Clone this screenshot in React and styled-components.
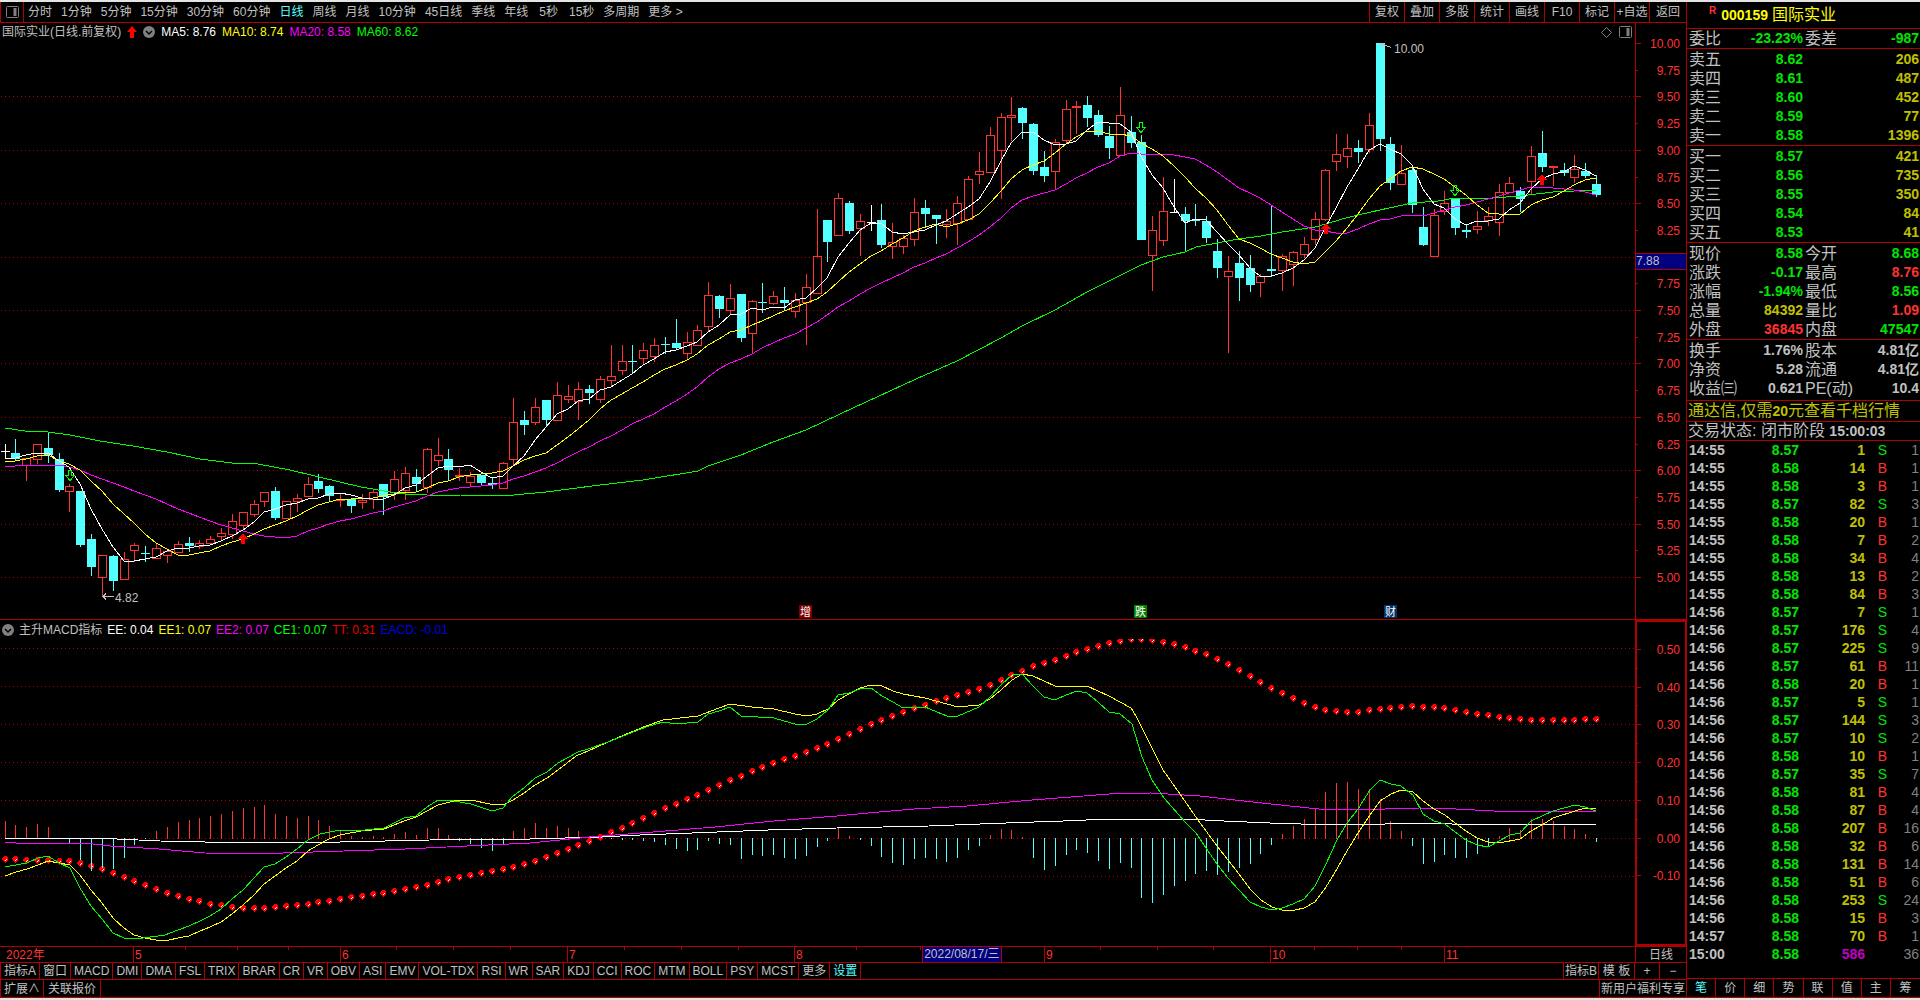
import React, { useState } from 'react';
import styled, { createGlobalStyle } from 'styled-components';

const LINE = '#b00000';
const RED = '#ff3232';
const CYAN = '#54ffff';
const GREEN = '#00e600';
const SILVER = '#c0c0c0';
const GOLD = '#c0c000';
const MAGENTA = '#ff00ff';

const periods = ['分时', '1分钟', '5分钟', '15分钟', '30分钟', '60分钟', '日线', '周线', '月线', '10分钟', '45日线', '季线', '年线', '5秒', '15秒', '多周期', '更多 >'];
const tools = ['复权', '叠加', '多股', '统计', '画线', 'F10', '标记', '+自选', '返回'];
const indicators = ['指标A', '窗口', 'MACD', 'DMI', 'DMA', 'FSL', 'TRIX', 'BRAR', 'CR', 'VR', 'OBV', 'ASI', 'EMV', 'VOL-TDX', 'RSI', 'WR', 'SAR', 'KDJ', 'CCI', 'ROC', 'MTM', 'BOLL', 'PSY', 'MCST', '更多', '设置'];
const sideTabs = ['笔', '价', '细', '势', '联', '值', '主', '筹'];

// type, high, body top, body bottom, low
const candles = `w 444 451 451 458|c 439 453 459 460|r 458 458 465 481|r 444 444 459 464|c 432 448 455 463|c 453 459 490 492
r 484 486 491 512|c 491 491 545 547|c 534 539 567 576|r 555 555 577 597|c 555 556 581 591|r 552 559 579 579
r 543 545 550 562|c 546 553 553 562|r 544 548 558 558|r 551 551 555 563|r 541 544 552 552|c 537 543 546 552
r 540 543 546 549|r 536 539 543 543|r 528 533 536 541|r 514 521 534 539|r 512 512 525 530|r 500 504 514 517
r 492 492 501 507|c 487 491 518 520|r 501 501 518 518|r 494 498 501 512|r 477 484 496 497|c 474 481 489 493
c 485 486 496 502|r 494 499 500 507|c 499 499 506 513|r 494 500 502 509|r 489 492 499 509|c 484 484 497 515
r 471 479 492 500|r 467 473 490 500|c 469 477 484 492|r 448 449 487 493|r 438 455 460 466|c 449 459 470 480
r 468 475 476 481|r 472 476 482 487|c 475 475 483 486|c 477 483 485 489|r 462 463 488 488|r 398 422 459 465
c 411 420 425 435|r 398 407 422 425|c 400 400 420 426|r 382 395 420 420|r 385 396 399 403|r 382 389 401 420
c 385 389 393 404|r 376 379 399 403|r 345 376 380 386|r 345 361 370 375|c 345 361 361 373|r 343 350 358 365
r 338 345 356 362|c 337 344 344 354|c 319 343 348 350|r 332 342 353 360|r 325 330 345 345|r 282 295 326 332
c 295 296 309 318|r 284 298 310 315|c 294 294 338 342|r 300 301 333 354|c 283 302 302 313|r 291 296 303 305
c 287 300 303 311|r 293 300 311 318|r 274 287 302 345|r 209 256 293 293|c 220 220 242 262|r 193 198 235 236
c 201 203 231 234|r 214 221 228 256|w 205 222 222 231|c 204 220 245 248|r 223 242 246 259|r 235 238 246 254
r 198 212 239 246|c 200 208 214 228|c 215 215 219 244|r 209 221 224 238|r 196 203 223 245|r 176 179 219 219
r 152 171 174 184|r 127 135 172 172|r 113 117 150 199|r 97 115 117 141|c 107 108 123 139|c 123 124 171 175
c 151 167 176 182|r 139 142 171 190|r 100 109 140 144|r 101 106 107 134|c 96 105 118 127|c 110 115 135 137
c 126 136 148 159|r 87 115 155 155|c 116 132 143 148|c 135 142 240 240|r 216 230 255 291|r 177 211 240 246
w 179 212 212 212|c 207 214 221 251|c 204 220 220 226|c 216 221 238 243|c 239 251 268 278|r 256 271 276 353
c 251 263 278 301|c 255 268 285 292|r 274 276 282 297|c 205 269 271 277|r 254 256 270 291|r 251 252 264 286
r 237 244 254 258|r 212 219 239 245|r 169 170 219 221|r 134 154 161 171|r 134 148 156 168|c 140 148 152 163
r 113 125 149 153|c 43 43 139 151|c 137 144 183 190|r 145 173 184 185|c 165 170 205 213|c 207 227 245 246
r 209 215 256 256|r 191 203 211 215|c 198 198 228 235|c 224 230 232 238|r 211 226 229 234|r 207 216 220 226
r 184 192 222 236|r 177 183 192 192|c 187 191 199 212|r 146 156 181 194|c 131 153 167 172|r 166 166 167 186
c 163 170 173 176|r 155 169 177 183|c 163 171 176 178|c 175 184 195 197`
  .split(/[|\n]/)
  .map((row) => {
    const [type, ...v] = row.split(' ');
    const [high, top, bottom, low] = v.map(Number);
    return { type, high, top, bottom, low, close: type === 'c' ? bottom : top };
  });

const histogram = [
  821, 825, 827, 824, 827, 838, 842, 859, 870, 867, 868, 857, 844, 838, 831, 827, 822, 820, 818, 816, 814, 811, 808, 807, 805,
  814, 816, 818, 816, 820, 826, 831, 836, 837, 836, 837, 834, 832, 835, 828, 828, 835, 840, 843, 847, 850, 844, 831, 828, 823,
  828, 826, 828, 831, 836, 837, 838, 839, 839, 840, 841, 844, 848, 850, 849, 840, 843, 844, 858, 854, 855, 854, 857, 858, 855,
  846, 840, 828, 836, 839, 845, 856, 862, 864, 858, 857, 858, 861, 857, 849, 845, 835, 829, 830, 837, 857, 869, 865, 854, 849,
  852, 860, 868, 862, 867, 897, 902, 894, 885, 880, 873, 870, 874, 871, 867, 863, 853, 844, 834, 826, 819, 809, 792, 783, 782,
  789, 789, 799, 821, 831, 845, 863, 861, 854, 857, 857, 853, 846, 836, 828, 830, 819, 819, 821, 826, 829, 834, 841,
];

const dots = [
  859, 859, 860, 860, 860, 861, 861, 863, 866, 869, 873, 877, 881, 885, 889, 893, 896, 899, 901, 904, 905, 907, 908, 908, 908,
  907, 906, 905, 904, 902, 901, 899, 897, 896, 894, 893, 891, 889, 887, 885, 882, 879, 877, 875, 873, 871, 869, 867, 864, 861,
  857, 853, 849, 845, 841, 837, 832, 828, 823, 818, 813, 808, 804, 799, 795, 790, 785, 780, 776, 771, 767, 763, 759, 756, 752,
  748, 744, 739, 734, 729, 724, 720, 716, 712, 708, 705, 701, 698, 695, 692, 689, 685, 680, 675, 671, 666, 663, 660, 656, 652,
  649, 646, 643, 641, 639, 639, 640, 642, 644, 647, 651, 654, 659, 664, 670, 676, 682, 688, 693, 698, 703, 707, 710, 711, 712,
  712, 710, 709, 708, 707, 706, 707, 707, 708, 710, 712, 714, 715, 717, 718, 719, 720, 720, 720, 720, 720, 719, 719,
];

const ma60 = '5,428 25,431 48,432 70,435 100,441 133,446 167,452 200,459 232,463 258,464 290,470 319,477 340,482 361,487 390,492 405,494 427,495 460,495 503,496 546,492 600,485 643,480 698,471 708,466 741,455 773,442 806,430 840,414 916,379 957,361 1001,338 1022,326 1055,310 1087,292 1131,270 1141,265 1163,257 1185,252 1196,247 1217,243 1239,239 1261,236 1282,232 1315,227 1326,224 1342,219 1358,215 1380,210 1412,203 1438,201 1455,198 1493,198 1520,196 1553,192 1596,190';

const ee = '5,838 95,838 160,841 205,842 340,842 430,840 530,839 600,837 640,835 692,833 768,830 837,828 929,826 1006,823 1063,821 1109,819 1186,819 1224,821 1270,823 1301,824 1385,824 1399,823 1449,823 1452,824 1596,824';

const ee2 = '5,842 16,843 85,843 110,846 159,849 205,853 254,854 313,852 405,849 530,843 590,837 653,832 715,827 774,821 837,816 868,813 914,809 967,806 1032,800 1071,797 1109,794 1151,793 1200,796 1235,800 1271,804 1319,809 1385,809 1420,808 1456,809 1494,811 1596,811';

const ee1 = '5,876 16,872 27,869 38,865 48,861 59,863 70,865 80,875 91,890 102,903 113,918 124,928 134,935 145,938 156,940 169,940 178,938 189,936 200,931 210,927 221,922 232,914 243,905 254,895 264,884 286,868 297,861 308,851 318,845 329,839 340,835 361,831 384,829 404,821 416,817 427,811 438,805 454,801 471,800 490,804 503,805 513,800 524,793 535,785 547,778 558,770 576,756 588,751 608,742 624,735 646,726 663,720 698,716 719,708 730,704 752,707 774,709 795,714 807,716 817,714 828,709 838,700 849,694 860,688 871,685 882,686 893,691 903,694 925,698 947,704 958,707 979,705 990,699 1001,690 1012,680 1022,674 1033,676 1044,681 1055,686 1066,687 1087,686 1098,691 1109,696 1120,702 1131,708 1136,716 1163,770 1180,794 1198,820 1217,846 1239,874 1250,889 1261,900 1272,907 1282,910 1295,910 1304,908 1315,902 1326,887 1337,869 1347,851 1358,833 1370,815 1380,801 1391,794 1401,790 1413,792 1423,801 1434,809 1445,815 1455,823 1466,831 1477,838 1488,842 1499,843 1520,839 1531,831 1542,825 1553,818 1575,811 1585,808 1596,809';

const ce1 = '5,867 27,863 38,858 48,856 59,863 70,868 80,888 91,906 102,919 113,933 124,938 143,938 165,935 178,930 189,926 200,921 210,916 221,909 232,899 243,890 254,878 264,867 275,864 286,857 297,849 308,840 320,834 340,830 355,831 384,828 404,818 416,816 427,807 438,800 454,801 471,804 492,811 503,808 512,797 524,788 535,778 547,772 558,763 578,752 588,749 608,742 646,727 663,722 677,724 698,722 708,714 719,711 730,707 741,716 774,718 784,721 795,724 807,724 817,719 828,710 838,695 849,693 860,689 871,688 882,696 893,702 903,708 925,707 937,712 947,716 958,716 979,707 990,697 1001,685 1012,675 1022,674 1033,686 1044,697 1055,700 1066,695 1077,691 1087,693 1098,702 1109,712 1120,714 1132,724 1142,757 1152,780 1164,798 1186,823 1196,833 1206,848 1217,864 1228,878 1239,890 1250,902 1261,907 1272,910 1282,908 1293,904 1304,899 1315,886 1326,864 1337,840 1347,823 1358,809 1370,790 1380,780 1391,784 1401,786 1413,795 1423,814 1434,821 1445,824 1455,832 1466,840 1477,845 1488,847 1499,841 1510,835 1520,833 1531,821 1542,816 1553,811 1575,805 1585,807 1596,811';

const sells = [['卖五', '8.62', '206'], ['卖四', '8.61', '487'], ['卖三', '8.60', '452'], ['卖二', '8.59', '77'], ['卖一', '8.58', '1396']];
const buys = [['买一', '8.57', '421'], ['买二', '8.56', '735'], ['买三', '8.55', '350'], ['买四', '8.54', '84'], ['买五', '8.53', '41']];

const quotes = [
  ['现价', '8.58', GREEN, '今开', '8.68', GREEN],
  ['涨跌', '-0.17', GREEN, '最高', '8.76', RED],
  ['涨幅', '-1.94%', GREEN, '最低', '8.56', GREEN],
  ['总量', '84392', GOLD, '量比', '1.09', RED],
  ['外盘', '36845', RED, '内盘', '47547', GREEN],
];

const basics = [
  ['换手', '1.76%', SILVER, '股本', '4.81亿', SILVER],
  ['净资', '5.28', SILVER, '流通', '4.81亿', SILVER],
  ['收益㈢', '0.621', SILVER, 'PE(动)', '10.4', SILVER],
];

const ticks = `14:55 8.57 1 S 1|14:55 8.58 14 B 1|14:55 8.58 3 B 1|14:55 8.57 82 S 3|14:55 8.58 20 B 1|14:55 8.58 7 B 2
14:55 8.58 34 B 4|14:55 8.58 13 B 2|14:55 8.58 84 B 3|14:56 8.57 7 S 1|14:56 8.57 176 S 4|14:56 8.57 225 S 9
14:56 8.57 61 B 11|14:56 8.58 20 B 1|14:56 8.57 5 S 1|14:56 8.57 144 S 3|14:56 8.57 10 S 2|14:56 8.58 10 B 1
14:56 8.57 35 S 7|14:56 8.58 81 B 4|14:56 8.58 87 B 4|14:56 8.58 207 B 16|14:56 8.58 32 B 6|14:56 8.58 131 B 14
14:56 8.58 51 B 6|14:56 8.58 253 S 24|14:56 8.58 15 B 3|14:57 8.58 70 B 1|15:00 8.58 586 - 36`
  .split(/[|\n]/)
  .map((row) => row.split(' '));

const months = ['2022年', '5', '6', '7', '8', '9', '10', '11'];
const weekTicks = [185, 237, 288, 396, 453, 510, 624, 681, 738, 856, 920, 1100, 1157, 1213, 1314, 1357, 1401];

const xAt = (i) => Math.floor(5 + i * 10.827);
const priceY = (price) => Math.round(43 + (10 - price) * 106.8);
const macdY = (value) => Math.round(838 - value * 381);

// average of the last n closes, `head` holds the points before n closes exist
const movingAverage = (n, head) =>
  candles
    .map((_, i) => {
      const y = i < head.length
        ? head[i]
        : candles.slice(i - n + 1, i + 1).reduce((sum, c) => sum + c.close, 0) / n;
      return `${xAt(i)},${Math.round(y)}`;
    })
    .join(' ');

const ma5 = movingAverage(5, [458, 458, 455, 453]);
const ma10 = movingAverage(10, [462, 461, 459, 456, 455, 461, 464, 470, 481]);
const ma20 = movingAverage(20, [466, 466, 465, 465, 465, 465, 467, 470, 475, 479, 483, 487, 491, 495, 499, 504, 509, 513, 517]);

function Candle({ x, type, high, top, bottom, low }) {
  const color = type === 'r' ? RED : type === 'c' ? CYAN : '#ffffff';
  return (
    <g fill={color}>
      {high < top && <rect x={x} y={high} width="1" height={top - high} />}
      {low > bottom && <rect x={x} y={bottom} width="1" height={low - bottom} />}
      {type === 'r' && bottom - top > 1 ? (
        <rect x={x - 3.5} y={top + 0.5} width="8" height={bottom - top} fill="none" stroke={color} />
      ) : (
        <rect x={x - 4} y={top} width="9" height={Math.max(bottom - top, 1) + (type === 'r' ? 1 : 0)} />
      )}
    </g>
  );
}

const Curve = ({ points, color }) => <polyline points={points} fill="none" stroke={color} strokeWidth="1" />;

const GridLine = ({ y }) => <line x1="1" x2="1635" y1={y + 0.5} y2={y + 0.5} stroke={LINE} strokeDasharray="1 3" />;

const BuyMark = ({ x, y }) => <path d={`M${x} ${y}l5 6h-3v5h-4v-5h-3z`} fill="#ff0000" />;
const SellMark = ({ x, y }) => <path d={`M${x - 1.5} ${y + 0.5}h3v5h3l-4.5 5l-4.5 -5h3z`} fill="none" stroke="#00ff00" />;

function PriceChart() {
  return (
    <Plot viewBox="0 41 1635 578" preserveAspectRatio="none" shapeRendering="crispEdges">
      {[9.5, 9, 8.5, 8, 7.5, 7, 6.5, 6, 5.5, 5].map((p) => <GridLine key={p} y={priceY(p)} />)}
      {candles.map((c, i) => <Candle key={i} x={xAt(i)} {...c} />)}
      <Curve points={ma60} color="#00ff00" />
      <Curve points={ma20} color={MAGENTA} />
      <Curve points={ma10} color="#ffff00" />
      <Curve points={ma5} color="#ffffff" />
      <BuyMark x={243} y={533} />
      <BuyMark x={1326} y={223} />
      <BuyMark x={1542} y={174} />
      <SellMark x={70} y={470} />
      <SellMark x={1141} y={122} />
      <SellMark x={1455} y={185} />
      <path d="M114 596.500H103M106 593.500l-3 3l3 3" fill="none" stroke={SILVER} />
      <text x="115" y="602" fill={SILVER}>4.82</text>
      <path d="M1391 47.500L1382 44M1380 43.500h4M1381 44v3" fill="none" stroke={SILVER} />
      <text x="1394" y="53" fill={SILVER}>10.00</text>
      <rect x="799" y="605" width="13" height="13" fill="#800000" />
      <text x="800" y="616" fontSize="11" fill="#ffffff">增</text>
      <rect x="1134" y="605" width="13" height="13" fill="#008000" />
      <text x="1135" y="616" fontSize="11" fill="#ffffff">跌</text>
      <rect x="1384" y="605" width="13" height="13" fill="#003468" />
      <text x="1385" y="616" fontSize="11" fill="#ffffff">财</text>
    </Plot>
  );
}

function PriceAxis() {
  const labels = [];
  for (let p = 10; p >= 5; p -= 0.25) labels.push(p);
  return (
    <Plot viewBox="0 23 50 596" preserveAspectRatio="none" shapeRendering="crispEdges">
      {labels.map((p) => (
        <g key={p}>
          <rect x="0" y={priceY(p)} width={p % 0.5 === 0 ? 5 : 2} height="1" fill={LINE} />
          <text x="44" y={priceY(p) + 5} textAnchor="end" fill={RED}>{p.toFixed(2)}</text>
        </g>
      ))}
      <rect x="0" y="253" width="50" height="17" fill={LINE} />
      <rect x="0" y="254" width="50" height="15" fill="#000080" />
      <text x="0" y="265" fill={SILVER}>7.88</text>
    </Plot>
  );
}

function MacdChart() {
  return (
    <Plot viewBox="0 639 1635 307" preserveAspectRatio="none" shapeRendering="crispEdges">
      {[0.5, 0.4, 0.3, 0.2, 0.1, 0, -0.1].map((v) => <GridLine key={v} y={macdY(v)} />)}
      {dots.map((y, i) => (
        <g key={i}>
          <path d={`M${xAt(i) - 1} ${y - 3}h3v1h1v4h-1v1h-1v1h-1v-1h-1v-1h-1v-1h-1v-2h1v-1h1z`} fill="#ff0000" />
          <rect x={xAt(i)} y={y + 1} width="1" height="1" fill="#ffffff" />
          <rect x={xAt(i) + 1} y={y} width="1" height="1" fill="#ffffff" />
        </g>
      ))}
      {histogram.map((y, i) => (
        <rect key={i} x={xAt(i)} y={Math.min(y, 838)} width="1" height={Math.abs(y - 838) + 1} fill={y < 838 ? RED : CYAN} />
      ))}
      <Curve points={ee} color="#ffffff" />
      <Curve points={ee2} color={MAGENTA} />
      <Curve points={ee1} color="#ffff00" />
      <Curve points={ce1} color="#00ff00" />
    </Plot>
  );
}

function MacdAxis() {
  const labels = [0.5, 0.4, 0.3, 0.2, 0.1, 0, -0.1];
  return (
    <Plot viewBox="1 621 48 324" preserveAspectRatio="none" shapeRendering="crispEdges">
      {labels.map((v) => (
        <g key={v}>
          <rect x="0" y={macdY(v)} width="5" height="1" fill={LINE} />
          {v >= 0 && <rect x="0" y={macdY(v - 0.05)} width="2" height="1" fill={LINE} />}
          <text x="44" y={macdY(v) + 5} textAnchor="end" fill={RED}>{v.toFixed(2)}</text>
        </g>
      ))}
    </Plot>
  );
}

const PanelIcon = () => (
  <svg width="13" height="12" viewBox="0 0 13 12" fill="none" stroke="#808080">
    <rect x="0.5" y="0.5" width="12" height="11" rx="1" />
    <rect x="8" y="2.500" width="2" height="7" fill="#808080" />
  </svg>
);

const ChevronIcon = () => (
  <svg width="12" height="12" viewBox="0 0 12 12">
    <circle cx="6" cy="6" r="6" fill="#808080" />
    <path d="M3 5l3 3l3 -3" fill="none" stroke="#000000" strokeWidth="1.500" />
  </svg>
);

function QuoteRow({ data }) {
  const [label, value, color, label2, value2, color2] = data;
  return (
    <Pair>
      <span>{label}</span>
      <Num color={color}>{value}</Num>
      <span>{label2}</span>
      <Num color={color2}>{value2}</Num>
    </Pair>
  );
}

function App() {
  const [period, setPeriod] = useState('日线');
  const [sideTab, setSideTab] = useState('笔');

  return (
    <>
      <GlobalStyle />
      <Page>
        <Main>
          <Toolbar>
            <IconCell aria-label="面板"><PanelIcon /></IconCell>
            <Periods>
              {periods.map((name) => (
                <PeriodButton key={name} $active={name === period} $wide={name === '5秒'} onClick={() => setPeriod(name)}>
                  {name}
                </PeriodButton>
              ))}
            </Periods>
            {tools.map((name) => <ToolButton key={name}>{name}</ToolButton>)}
          </Toolbar>

          <ChartRow $grow={596}>
            <ChartColumn>
              <InfoBar>
                <InfoText>国际实业(日线.前复权)</InfoText>
                <svg width="10" height="12" viewBox="0 0 10 12">
                  <path d="M5 0l5 6h-3v6h-4v-6h-3z" fill="#ff0000" />
                </svg>
                <ChevronIcon />
                <InfoText color="#ffffff">MA5: 8.76</InfoText>
                <InfoText color="#ffff00">MA10: 8.74</InfoText>
                <InfoText color={MAGENTA}>MA20: 8.58</InfoText>
                <InfoText color="#00ff00">MA60: 8.62</InfoText>
                <CornerIcons>
                  <svg width="11" height="11" viewBox="0 0 11 11" fill="none" stroke="#808080">
                    <path d="M5.500 0.500l5 5l-5 5l-5 -5z" />
                  </svg>
                  <PanelIcon />
                </CornerIcons>
              </InfoBar>
              <PriceChart />
            </ChartColumn>
            <AxisColumn><PriceAxis /></AxisColumn>
          </ChartRow>

          <ChartRow $grow={326}>
            <ChartColumn>
              <InfoBar $sub>
                <ChevronIcon />
                <InfoText>主升MACD指标</InfoText>
                <InfoText color="#ffffff">EE: 0.04</InfoText>
                <InfoText color="#ffff00">EE1: 0.07</InfoText>
                <InfoText color={MAGENTA}>EE2: 0.07</InfoText>
                <InfoText color="#00ff00">CE1: 0.07</InfoText>
                <InfoText color="#ee0000">TT: 0.31</InfoText>
                <InfoText color="#0000e6">EACD: -0.01</InfoText>
              </InfoBar>
              <MacdChart />
            </ChartColumn>
            <AxisColumn $framed><MacdAxis /></AxisColumn>
          </ChartRow>

          <DateRow>
            <Months>
              {months.map((name) => <Month key={name}>{name}</Month>)}
              <WeekTicks viewBox="0 0 1635 3" preserveAspectRatio="none" shapeRendering="crispEdges">
                {weekTicks.map((x) => <rect key={x} x={x} y="0" width="1" height="3" fill={LINE} />)}
              </WeekTicks>
              <DateBadge>2022/08/17/三</DateBadge>
            </Months>
            <PeriodCell>日线</PeriodCell>
          </DateRow>

          <TabRow $height={17}>
            {indicators.map((name) => <Tab key={name} $active={name === '设置'}>{name}</Tab>)}
            <Spacer />
            <Tab $width={36} $first>指标B</Tab>
            <Tab $width={36}>模 板</Tab>
            <Tab $width={25}>+</Tab>
            <Tab $width={26}>−</Tab>
          </TabRow>
          <TabRow $height={18}>
            <Tab $width={43}>扩展∧</Tab>
            <Tab $width={57}>关联报价</Tab>
            <Spacer />
            <Tab $width={87} $first>新用户福利专享</Tab>
          </TabRow>
        </Main>

        <Side>
          <Title>
            <Flag>R</Flag>
            <Code>000159</Code>
            国际实业
          </Title>
          <Section><QuoteRow data={['委比', '-23.23%', GREEN, '委差', '-987', GREEN]} /></Section>
          {[sells, buys].map((group, i) => (
            <Section key={i} $pad="1px 0 0">
              {group.map(([label, price, volume]) => (
                <Pair key={label}>
                  <span>{label}</span>
                  <Num color={GREEN}>{price}</Num>
                  <span />
                  <Num color={GOLD}>{volume}</Num>
                </Pair>
              ))}
            </Section>
          ))}
          <Section $pad="1px 0 0">{quotes.map((row) => <QuoteRow key={row[0]} data={row} />)}</Section>
          <Section $pad="1px 0 2px">{basics.map((row) => <QuoteRow key={row[0]} data={row} />)}</Section>
          <Notice href="#level2">通达信,仅需<b>20</b>元查看千档行情</Notice>
          <Status>交易状态: 闭市阶段 <b>15:00:03</b></Status>
          <Ticks>
            <tbody>
              {ticks.map(([time, price, volume, side, count], i) => (
                <tr key={i}>
                  <Cell $color={SILVER} $width={52} $left>{time}</Cell>
                  <Cell $color={GREEN} $width={60}>{price}</Cell>
                  <Cell $color={side === '-' ? '#c000c0' : GOLD} $width={66}>{volume}</Cell>
                  <Cell $color={side === 'B' ? RED : GREEN} $width={22} $plain>{side === '-' ? '' : side}</Cell>
                  <Cell $color="#808080" $plain>{count}</Cell>
                </tr>
              ))}
            </tbody>
          </Ticks>
          <SideTabs>
            {sideTabs.map((name) => (
              <SideTab key={name} $active={name === sideTab} onClick={() => setSideTab(name)}>{name}</SideTab>
            ))}
          </SideTabs>
        </Side>
      </Page>
    </>
  );
}

const GlobalStyle = createGlobalStyle`
  * {
    box-sizing: border-box;
  }

  body {
    margin: 0;
    background: #000000;
    color: ${SILVER};
    font: 12px "Liberation Sans", "Noto Sans CJK SC", sans-serif;
  }

  button {
    padding: 0;
    border: 0;
    background: none;
    color: inherit;
    font: inherit;
    white-space: nowrap;
    cursor: pointer;
  }
`;

const Page = styled.div`
  display: grid;
  grid-template-columns: minmax(0, 1fr) 234px;
  min-height: 100vh;
  border-top: 2px solid #e4e4e4;
  border-bottom: 2px solid #e4e4e4;
`;

const Main = styled.main`
  display: flex;
  flex-direction: column;
  min-width: 0;
`;

const Toolbar = styled.nav`
  display: flex;
  height: 21px;
  border-bottom: 1px solid ${LINE};
`;

const IconCell = styled.button`
  display: flex;
  align-items: center;
  justify-content: center;
  width: 24px;
  border-left: 1px solid ${LINE};
  border-right: 1px solid ${LINE};
`;

const Periods = styled.div`
  display: flex;
  flex: 1;
  gap: 9px;
  padding-left: 4px;
`;

const PeriodButton = styled.button`
  padding: ${(p) => (p.$wide ? '0 2px' : '0')};
  color: ${(p) => (p.$active ? CYAN : SILVER)};
  line-height: 20px;
`;

const ToolButton = styled.button`
  width: 35px;
  border-left: 1px solid ${LINE};
  line-height: 20px;

  &:last-child {
    width: 37px;
  }
`;

const ChartRow = styled.section`
  display: flex;
  flex: ${(p) => p.$grow} 0 0;
  min-height: 0;
  border-bottom: 1px solid ${LINE};
`;

const ChartColumn = styled.div`
  display: flex;
  flex: 1;
  flex-direction: column;
  min-width: 0;
`;

const AxisColumn = styled.div`
  display: flex;
  width: 51px;
  border-left: 1px solid ${LINE};
  ${(p) => p.$framed && `border: 2px solid ${LINE}; border-right-width: 1px;`}
`;

const InfoBar = styled.div`
  display: flex;
  align-items: center;
  gap: ${(p) => (p.$sub ? 5 : 6)}px;
  height: ${(p) => (p.$sub ? 19 : 18)}px;
  padding: 0 3px 0 2px;
`;

const InfoText = styled.span`
  color: ${(p) => p.color || SILVER};
  line-height: 18px;
  white-space: nowrap;
`;

const CornerIcons = styled.div`
  display: flex;
  align-items: center;
  gap: 7px;
  margin-left: auto;
`;

const Plot = styled.svg`
  display: block;
  flex: 1;
  width: 100%;
  min-height: 0;
`;

const DateRow = styled.div`
  display: flex;
  height: 16px;
  border-bottom: 1px solid ${LINE};
`;

const Months = styled.div`
  position: relative;
  display: grid;
  flex: 1;
  grid-template-columns: 133fr 207fr 227fr 227fr 250fr 226fr 174fr 191fr;
`;

const Month = styled.span`
  padding-left: 1px;
  border-left: 1px solid ${LINE};
  color: ${RED};
  line-height: 16px;

  &:first-child {
    padding-left: 6px;
    border-left: 0;
  }
`;

const WeekTicks = styled.svg`
  position: absolute;
  top: 0;
  left: 0;
  width: 100%;
  height: 3px;
`;

const DateBadge = styled.span`
  position: absolute;
  top: 0;
  bottom: 0;
  left: 56.4%;
  padding: 0 1px;
  border-left: 1px solid ${LINE};
  border-right: 1px solid ${LINE};
  background: #000080;
  line-height: 15px;
`;

const PeriodCell = styled.span`
  width: 51px;
  border-left: 1px solid ${LINE};
  line-height: 16px;
  text-align: center;
`;

const TabRow = styled.nav`
  display: flex;
  height: ${(p) => p.$height}px;
  border-bottom: 1px solid ${LINE};
  border-left: 1px solid ${LINE};
`;

const Tab = styled.button`
  flex: none;
  width: ${(p) => (p.$width ? `${p.$width}px` : 'auto')};
  padding: 0 ${(p) => (p.$width ? 0 : 3)}px;
  border-right: 1px solid ${LINE};
  ${(p) => p.$first && `border-left: 1px solid ${LINE};`}
  color: ${(p) => (p.$active ? CYAN : SILVER)};
  line-height: 16px;

  &:last-child {
    border-right: 0;
  }
`;

const Spacer = styled.div`
  flex: 1;
`;

const Side = styled.aside`
  display: flex;
  flex-direction: column;
  border-left: 1px solid ${LINE};
  font-size: 16px;

  b {
    font-size: 14px;
  }
`;

const Title = styled.h1`
  display: flex;
  align-items: center;
  justify-content: center;
  height: 27px;
  margin: 0;
  padding-right: 62px;
  border-bottom: 1px solid ${LINE};
  color: #ffff00;
  font-size: 16px;
  font-weight: 400;
  line-height: 26px;
`;

const Flag = styled.sup`
  align-self: flex-start;
  margin-right: 5px;
  color: ${RED};
  font-size: 10px;
  font-weight: 700;
  line-height: 18px;
`;

const Code = styled.strong`
  margin-right: 4px;
  font-size: 14px;
`;

const Section = styled.div`
  padding: ${(p) => p.$pad || 0};
  border-bottom: 1px solid ${LINE};
`;

const Pair = styled.div`
  display: grid;
  grid-template-columns: 50px 62px 50px 1fr;
  column-gap: 2px;
  height: 19px;
  padding: 0 1px 0 2px;
  line-height: 19px;
  white-space: nowrap;
`;

const Num = styled.span`
  color: ${(p) => p.color};
  font-size: 14px;
  font-weight: 700;
  text-align: right;
`;

const Notice = styled.a`
  padding-left: 1px;
  border-bottom: 1px solid ${LINE};
  color: ${GOLD};
  line-height: 20px;
  text-decoration: none;
  white-space: nowrap;
`;

const Status = styled.div`
  padding-left: 1px;
  border-bottom: 1px solid ${LINE};
  line-height: 18px;
  white-space: nowrap;
`;

const Ticks = styled.table`
  width: 100%;
  border-collapse: collapse;
  table-layout: fixed;
`;

const Cell = styled.td`
  width: ${(p) => (p.$width ? `${p.$width}px` : 'auto')};
  height: 18px;
  padding: 0 ${(p) => (p.$left || p.$width ? 0 : 1)}px 0 ${(p) => (p.$left ? 2 : 0)}px;
  color: ${(p) => p.$color};
  font-size: 14px;
  font-weight: ${(p) => (p.$plain ? 400 : 700)};
  line-height: 18px;
  text-align: ${(p) => (p.$left ? 'left' : 'right')};
`;

const SideTabs = styled.nav`
  display: grid;
  grid-template-columns: repeat(8, 1fr);
  height: 20px;
  margin-top: auto;
  border-top: 1px solid ${LINE};
  border-bottom: 1px solid ${LINE};
  font-size: 12px;
`;

const SideTab = styled.button`
  border-right: 1px solid ${LINE};
  color: ${(p) => (p.$active ? CYAN : SILVER)};
  line-height: 18px;

  &:last-child {
    border-right: 0;
  }
`;

export default App;
